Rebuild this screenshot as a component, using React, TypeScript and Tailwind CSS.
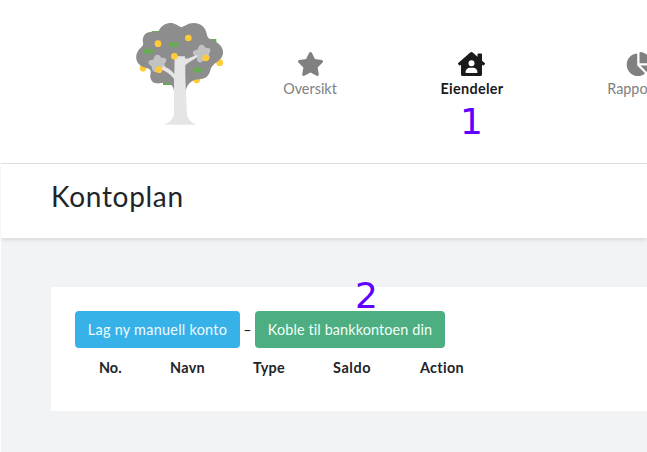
import type { ReactNode } from "react";
import { FaChartPie, FaHouseUser, FaStar } from "react-icons/fa";

function TreeLogo() {
  return (
    <svg viewBox="0 0 330 345" className="mt-[15px] ml-[124px] h-[115px] w-[110px] shrink-0">
      <g fill="#ffcb37">
        <circle cx="54" cy="160" r="10" />
        <circle cx="284" cy="143" r="10" />
        <circle cx="215" cy="195" r="10" />
      </g>
      <g fill="#69aa55">
        <rect x="80" y="48" width="24" height="14" />
        <rect x="245" y="72" width="29" height="14" />
        <rect x="114" y="197" width="28" height="13" />
      </g>
      <path
        fill="#8d8d8d"
        d="M102 46C110 30 124 24 137 24C150 24 158 32 166 35C176 40 184 24 206 24C230 24 243 40 246 60C249 75 264 74 278 84C298 98 299 122 284 134C274 143 259 150 256 166C253 181 242 193 222 193C203 193 187 205 182 228H147C145 213 138 204 124 203C111 202 104 207 94 205C79 203 73 189 77 174C80 160 66 160 53 155C34 147 28 125 39 108C47 96 57 94 54 82C50 65 62 50 78 51C88 51 96 58 102 46Z"
      />
      <g fill="#c2c2c2">
        <path d="M88 126C90 118 103 117 107 126C109 131 122 125 124 135C125 142 116 145 119 150C126 158 117 167 110 164C103 160 100 174 88 170C78 166 83 155 78 152C68 148 68 135 78 135C85 136 87 132 88 126Z" />
        <path d="M220 97C222 88 236 87 239 95C241 101 253 95 256 104C257 112 249 115 253 122C257 130 250 138 242 134C235 130 234 145 222 142C213 138 218 127 212 124C202 121 201 108 210 106C217 106 219 103 220 97Z" />
      </g>
      <path
        fill="#e5e5e5"
        d="M149 124H180V130C191 133 198 125 216 120L217 125C207 134 190 141 181 151C180 190 184 244 186 296C187 312 199 323 216 329H117C134 322 146 311 147 297V191C136 179 126 170 108 163L113 154C129 158 140 167 148 177Z"
      />
      <g fill="#69aa55">
        <rect x="131" y="82" width="29" height="14" />
        <rect x="57" y="102" width="29" height="14" />
        <rect x="204" y="158" width="28" height="14" />
      </g>
      <g fill="#ffcb37">
        <circle cx="99" cy="86" r="10" />
        <circle cx="190" cy="69" r="10" />
        <circle cx="148" cy="124" r="10" />
        <circle cx="102" cy="164" r="10" />
        <circle cx="242" cy="129" r="10" />
      </g>
    </svg>
  );
}

function NavItem({ icon, className, children }: { icon: ReactNode; className: string; children: ReactNode }) {
  return (
    <a className={`flex shrink-0 flex-col items-center whitespace-nowrap ${className}`}>
      {icon}
      <span className="mt-[2px] leading-[21px]">{children}</span>
    </a>
  );
}

export default function App() {
  return (
    <div className="relative h-[452px] w-[647px] overflow-hidden bg-white pl-px font-['Lato',sans-serif] text-[14.4px] text-[#212529] [font-variant-ligatures:none]">
      <div className="flex h-full flex-col bg-[#f2f3f5]">
        <nav className="flex h-[164px] shrink-0 items-start overflow-hidden border-b border-[#dee2e6] bg-white">
          <TreeLogo />
          <div className="flex pt-[52px]">
            <NavItem className="ml-[47px] w-[56px] text-[#808080]" icon={<FaStar className="h-6 w-[27px]" />}>
              Oversikt
            </NavItem>
            <NavItem
              className="ml-[101px] w-[66px] font-bold tracking-[0.3px] text-[#1a1a1a]"
              icon={<FaHouseUser className="mr-[2px] h-6 w-[27px]" />}
            >
              Eiendeler
            </NavItem>
            <NavItem className="ml-[101px] w-[66px] text-[#808080]" icon={<FaChartPie className="h-6 w-[27px]" />}>
              Rapporter
            </NavItem>
          </div>
        </nav>
        <header className="h-[74px] shrink-0 bg-white pt-[15px] pl-[50px] shadow-[0_2px_4px_rgba(0,0,0,0.1)]">
          <h1 className="text-[28px] leading-[34px] tracking-[0.7px]">Kontoplan</h1>
        </header>
        <main className="mt-[49px] ml-[50px] h-[124px] bg-white px-6 pt-6">
          <div className="flex items-center">
            <button className="h-[37px] w-[165px] rounded bg-[#36b2e9] tracking-[0.28px] whitespace-nowrap text-[#f1faff]">
              Lag ny manuell konto
            </button>
            <span className="w-[15px] text-center">–</span>
            <button className="h-[37px] w-[190px] rounded bg-[#4cae81] tracking-[0.12px] whitespace-nowrap text-[#f1fff8]">
              Koble til bankkontoen din
            </button>
          </div>
          <table className="mt-[9px] ml-6 leading-[22px]">
            <thead>
              <tr className="text-left font-bold tracking-[0.3px]">
                <th className="w-[71px] p-0 tracking-normal">No.</th>
                <th className="w-[83px] p-0">Navn</th>
                <th className="w-[80px] p-0">Type</th>
                <th className="w-[87px] p-0 tracking-[0.6px]">Saldo</th>
                <th className="w-[50px] p-0">Action</th>
              </tr>
            </thead>
          </table>
        </main>
      </div>
      <span className="absolute top-[101px] left-[460px] font-['DejaVu_Sans',sans-serif] text-[36px] leading-[42px] text-[#6000ff]">
        1
      </span>
      <span className="absolute top-[275px] left-[355px] font-['DejaVu_Sans',sans-serif] text-[36px] leading-[42px] text-[#6000ff]">
        2
      </span>
    </div>
  );
}
